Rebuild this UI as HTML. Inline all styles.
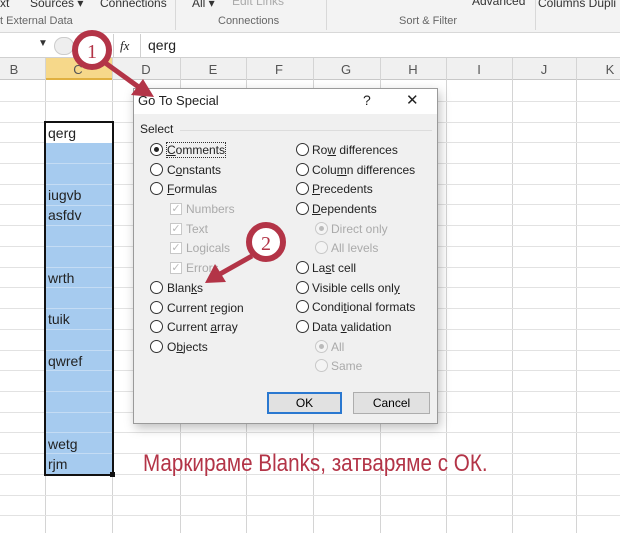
<!DOCTYPE html>
<html><head><meta charset="utf-8"><style>
*{margin:0;padding:0;box-sizing:border-box}
body{width:620px;height:533px;overflow:hidden;background:#fff;font-family:"Liberation Sans",sans-serif;position:relative}
.abs{position:absolute}
.t{position:absolute;font-size:12px;color:#222;white-space:nowrap}
.rb{position:absolute;width:13px;height:13px;border:1px solid #333;border-radius:50%;background:#fff}
.rb.d{border-color:#c8c8c8;background:#f4f4f4}
.cb{position:absolute;width:12px;height:12px;border:1px solid #c8c8c8;background:#fff;color:#bbb;font-size:11px;line-height:10px;text-align:center}
.g{color:#aaa}
</style></head><body>
<!-- ribbon -->
<div class="abs" style="left:0;top:0;width:620px;height:33px;background:#f3f3f3;border-bottom:1px solid #d8d8d8"></div>
<div class="t" style="left:0;top:-4px;font-size:12px;color:#333">xt</div>
<div class="t" style="left:30px;top:-4px;font-size:12px;color:#333">Sources ▾</div>
<div class="t" style="left:100px;top:-4px;font-size:12px;color:#333">Connections</div>
<div class="t" style="left:192px;top:-4px;font-size:12px;color:#333">All ▾</div>
<div class="t" style="left:232px;top:-6px;font-size:12px;color:#aaa">Edit Links</div>
<div class="t" style="left:472px;top:-6px;font-size:12px;color:#333">Advanced</div>
<div class="t" style="left:538px;top:-4px;font-size:12px;color:#333">Columns Dupli</div>
<div class="t" style="left:0;top:15px;font-size:11px;color:#666">t External Data</div>
<div class="t" style="left:218px;top:15px;font-size:11px;color:#666">Connections</div>
<div class="t" style="left:399px;top:15px;font-size:11px;color:#666">Sort &amp; Filter</div>
<div class="abs" style="left:175px;top:0;width:1px;height:30px;background:#d8d8d8"></div>
<div class="abs" style="left:326px;top:0;width:1px;height:30px;background:#d8d8d8"></div>
<div class="abs" style="left:535px;top:0;width:1px;height:30px;background:#d8d8d8"></div>
<!-- formula bar -->
<div class="abs" style="left:0;top:34px;width:620px;height:24px;background:#fff;border-bottom:1px solid #d0d0d0"></div>
<div class="t" style="left:38px;top:38px;font-size:10px;color:#333">▼</div>
<div class="abs" style="left:54px;top:37px;width:20px;height:18px;border:1px solid #ccc;border-radius:9px;background:#eee"></div>
<div class="abs" style="left:113px;top:34px;width:1px;height:24px;background:#d0d0d0"></div>
<div class="abs" style="left:140px;top:34px;width:1px;height:24px;background:#d0d0d0"></div>
<div class="t" style="left:120px;top:38px;font-family:'Liberation Serif',serif;font-style:italic;font-size:13px">fx</div>
<div class="t" style="left:148px;top:37px;font-size:14px">qerg</div>
<!-- headers -->
<div class="abs" style="left:0;top:58px;width:620px;height:22px;background:#f0f0f0;border-bottom:1px solid #c8c8c8"></div>
<div class="abs" style="left:45px;top:58px;width:67px;height:22px;background:#f6d88a;border-bottom:2px solid #e0b040"></div>
<svg class="abs" style="left:0;top:58px" width="620" height="475">
<g stroke="#d4d4d4" stroke-width="1">
<line x1="45.5" y1="0" x2="45.5" y2="475"/><line x1="112.5" y1="0" x2="112.5" y2="475"/><line x1="180.5" y1="0" x2="180.5" y2="475"/><line x1="246.5" y1="0" x2="246.5" y2="475"/><line x1="313.5" y1="0" x2="313.5" y2="475"/><line x1="380.5" y1="0" x2="380.5" y2="475"/><line x1="446.5" y1="0" x2="446.5" y2="475"/><line x1="512.5" y1="0" x2="512.5" y2="475"/><line x1="576.5" y1="0" x2="576.5" y2="475"/>
</g>
<g stroke="#e2e2e2">
<line x1="0" y1="43.5" x2="620" y2="43.5"/><line x1="0" y1="64.5" x2="620" y2="64.5"/><line x1="0" y1="84.5" x2="620" y2="84.5"/><line x1="0" y1="105.5" x2="620" y2="105.5"/><line x1="0" y1="126.5" x2="620" y2="126.5"/><line x1="0" y1="146.5" x2="620" y2="146.5"/><line x1="0" y1="167.5" x2="620" y2="167.5"/><line x1="0" y1="188.5" x2="620" y2="188.5"/><line x1="0" y1="209.5" x2="620" y2="209.5"/><line x1="0" y1="229.5" x2="620" y2="229.5"/><line x1="0" y1="250.5" x2="620" y2="250.5"/><line x1="0" y1="271.5" x2="620" y2="271.5"/><line x1="0" y1="292.5" x2="620" y2="292.5"/><line x1="0" y1="312.5" x2="620" y2="312.5"/><line x1="0" y1="333.5" x2="620" y2="333.5"/><line x1="0" y1="354.5" x2="620" y2="354.5"/><line x1="0" y1="374.5" x2="620" y2="374.5"/><line x1="0" y1="395.5" x2="620" y2="395.5"/><line x1="0" y1="416.5" x2="620" y2="416.5"/><line x1="0" y1="437.5" x2="620" y2="437.5"/><line x1="0" y1="457.5" x2="620" y2="457.5"/>
</g>
<g font-family="Liberation Sans" font-size="13" fill="#555" text-anchor="middle">
<text x="14" y="16">B</text><text x="78" y="16">C</text><text x="146" y="16">D</text><text x="213" y="16">E</text><text x="279" y="16">F</text><text x="346" y="16">G</text><text x="413" y="16">H</text><text x="479" y="16">I</text><text x="544" y="16">J</text><text x="610" y="16">K</text>
</g>
</svg>
<!-- selection -->
<div class="abs" style="left:46px;top:122px;width:66px;height:352px;background:#a6cbef"></div>
<svg class="abs" style="left:46px;top:122px" width="66" height="352"><g stroke="#c4dcf4"><line x1="0" y1="20.5" x2="66" y2="20.5"/><line x1="0" y1="41.5" x2="66" y2="41.5"/><line x1="0" y1="62.5" x2="66" y2="62.5"/><line x1="0" y1="83.5" x2="66" y2="83.5"/><line x1="0" y1="103.5" x2="66" y2="103.5"/><line x1="0" y1="124.5" x2="66" y2="124.5"/><line x1="0" y1="145.5" x2="66" y2="145.5"/><line x1="0" y1="165.5" x2="66" y2="165.5"/><line x1="0" y1="186.5" x2="66" y2="186.5"/><line x1="0" y1="207.5" x2="66" y2="207.5"/><line x1="0" y1="228.5" x2="66" y2="228.5"/><line x1="0" y1="248.5" x2="66" y2="248.5"/><line x1="0" y1="269.5" x2="66" y2="269.5"/><line x1="0" y1="290.5" x2="66" y2="290.5"/><line x1="0" y1="310.5" x2="66" y2="310.5"/><line x1="0" y1="331.5" x2="66" y2="331.5"/></g></svg>
<div class="abs" style="left:46px;top:122px;width:66px;height:21px;background:#fff"></div>
<div class="abs" style="left:44px;top:121px;width:70px;height:355px;border:2px solid #111"></div>
<div class="abs" style="left:110px;top:472px;width:5px;height:5px;background:#111"></div>
<div class="t" style="left:48px;top:125px;font-size:14px">qerg</div>
<div class="t" style="left:48px;top:187px;font-size:14px">iugvb</div>
<div class="t" style="left:48px;top:207px;font-size:14px">asfdv</div>
<div class="t" style="left:48px;top:270px;font-size:14px">wrth</div>
<div class="t" style="left:48px;top:311px;font-size:14px">tuik</div>
<div class="t" style="left:48px;top:353px;font-size:14px">qwref</div>
<div class="t" style="left:48px;top:436px;font-size:14px">wetg</div>
<div class="t" style="left:48px;top:456px;font-size:14px">rjm</div>
<!-- dialog -->
<div class="abs" style="left:133px;top:88px;width:305px;height:336px;background:#f0f0f0;border:1px solid #9a9a9a;box-shadow:2px 4px 10px rgba(0,0,0,.25)"></div>
<div class="abs" style="left:134px;top:89px;width:303px;height:25px;background:#fff"></div>
<div class="t" style="left:138px;top:93px;font-size:13px">Go To Special</div>
<div class="t" style="left:363px;top:92px;font-size:14px">?</div>
<div class="t" style="left:406px;top:91px;font-size:15px">✕</div>
<div class="t" style="left:140px;top:122px">Select</div>
<div class="abs" style="left:180px;top:130px;width:252px;height:1px;background:#dcdcdc"></div>
<!-- left column -->
<div class="rb" style="left:150px;top:143px"></div><div class="abs" style="left:154px;top:147px;width:5px;height:5px;border-radius:50%;background:#222"></div>
<div class="t" style="left:167px;top:143px;outline:1px dotted #333"><u>C</u>omments</div>
<div class="rb" style="left:150px;top:163px"></div><div class="t" style="left:167px;top:163px">C<u>o</u>nstants</div>
<div class="rb" style="left:150px;top:182px"></div><div class="t" style="left:167px;top:182px"><u>F</u>ormulas</div>
<div class="cb" style="left:170px;top:203px">✓</div><div class="t g" style="left:186px;top:202px">Numbers</div>
<div class="cb" style="left:170px;top:223px">✓</div><div class="t g" style="left:186px;top:222px">Text</div>
<div class="cb" style="left:170px;top:242px">✓</div><div class="t g" style="left:186px;top:241px">Logicals</div>
<div class="cb" style="left:170px;top:262px">✓</div><div class="t g" style="left:186px;top:261px">Errors</div>
<div class="rb" style="left:150px;top:281px"></div><div class="t" style="left:167px;top:281px">Blan<u>k</u>s</div>
<div class="rb" style="left:150px;top:301px"></div><div class="t" style="left:167px;top:301px">Current <u>r</u>egion</div>
<div class="rb" style="left:150px;top:320px"></div><div class="t" style="left:167px;top:320px">Current <u>a</u>rray</div>
<div class="rb" style="left:150px;top:340px"></div><div class="t" style="left:167px;top:340px">O<u>b</u>jects</div>
<!-- right column -->
<div class="rb" style="left:296px;top:143px"></div><div class="t" style="left:312px;top:143px">Ro<u>w</u> differences</div>
<div class="rb" style="left:296px;top:163px"></div><div class="t" style="left:312px;top:163px">Colu<u>m</u>n differences</div>
<div class="rb" style="left:296px;top:182px"></div><div class="t" style="left:312px;top:182px"><u>P</u>recedents</div>
<div class="rb" style="left:296px;top:202px"></div><div class="t" style="left:312px;top:202px"><u>D</u>ependents</div>
<div class="rb d" style="left:315px;top:222px"></div><div class="abs" style="left:319px;top:226px;width:5px;height:5px;border-radius:50%;background:#bbb"></div><div class="t g" style="left:331px;top:222px">Direct only</div>
<div class="rb d" style="left:315px;top:241px"></div><div class="t g" style="left:331px;top:241px">All levels</div>
<div class="rb" style="left:296px;top:261px"></div><div class="t" style="left:312px;top:261px">La<u>s</u>t cell</div>
<div class="rb" style="left:296px;top:281px"></div><div class="t" style="left:312px;top:281px">Visible cells onl<u>y</u></div>
<div class="rb" style="left:296px;top:300px"></div><div class="t" style="left:312px;top:300px">Condi<u>t</u>ional formats</div>
<div class="rb" style="left:296px;top:320px"></div><div class="t" style="left:312px;top:320px">Data <u>v</u>alidation</div>
<div class="rb d" style="left:315px;top:340px"></div><div class="abs" style="left:319px;top:344px;width:5px;height:5px;border-radius:50%;background:#bbb"></div><div class="t g" style="left:331px;top:340px">All</div>
<div class="rb d" style="left:315px;top:359px"></div><div class="t g" style="left:331px;top:359px">Same</div>
<div class="abs" style="left:267px;top:392px;width:75px;height:22px;border:2px solid #2a78d0;background:#e1e1e1;font-size:12px;text-align:center;line-height:18px">OK</div>
<div class="abs" style="left:353px;top:392px;width:77px;height:22px;border:1px solid #adadad;background:#e1e1e1;font-size:12px;text-align:center;line-height:20px">Cancel</div>
<!-- annotations -->
<svg class="abs" style="left:0;top:0" width="620" height="533">
<g fill="#b33447" stroke="#b33447">
<line x1="104" y1="62" x2="140" y2="88" stroke-width="5"/>
<polygon points="154,97 131,95 143,79" stroke="none"/>
<line x1="252" y1="256" x2="220" y2="274" stroke-width="5"/>
<polygon points="205,283 215,264 226,282" stroke="none"/>
</g>
<circle cx="92" cy="50" r="17" fill="#fff" stroke="#b33447" stroke-width="6"/>
<circle cx="92" cy="50" r="13" fill="none" stroke="#fff" stroke-width="1"/>
<text x="92" y="58" text-anchor="middle" font-family="Liberation Serif" font-size="20" fill="#b33447">1</text>
<circle cx="266" cy="242" r="17" fill="#fff" stroke="#b33447" stroke-width="6"/>
<text x="266" y="250" text-anchor="middle" font-family="Liberation Serif" font-size="20" fill="#b33447">2</text>
</svg>
<div class="t" style="left:143px;top:450px;font-size:24px;color:#b33447;transform:scaleX(0.86);transform-origin:0 0">Маркираме Blanks, затваряме с ОК.</div>
</body></html>
